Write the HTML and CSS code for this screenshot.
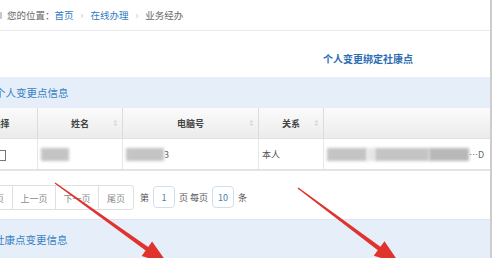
FILE: index.html
```html
<!DOCTYPE html>
<html lang="zh-CN">
<head>
    <meta charset="UTF-8">
    <title>业务经办</title>
    <link rel="stylesheet" href="styles.css">
</head>
<body>
    <div class="page">
        <div class="crumbs">
            <span class="crumb-icon"></span>
            <span>您的位置：</span>
            <a href="#">首页</a>
            <span class="sep">›</span>
            <a href="#">在线办理</a>
            <span class="sep">›</span>
            <span>业务经办</span>
        </div>

        <div class="actions">
            <a href="#" class="action-link">个人变更绑定社康点</a>
        </div>

        <div class="band">个人变更点信息</div>

        <table class="grid">
            <thead>
                <tr>
                    <th class="col-sel">选择</th>
                    <th class="col-name">姓名<span class="sort">⇕</span></th>
                    <th class="col-no">电脑号<span class="sort">⇕</span></th>
                    <th class="col-rel">关系<span class="sort">⇕</span></th>
                    <th></th>
                </tr>
            </thead>
            <tbody>
                <tr>
                    <td class="col-sel"><span class="check"></span></td>
                    <td><span class="blur" style="width: 28px"></span></td>
                    <td><span class="blur" style="width: 38px"></span><span class="tail">3</span></td>
                    <td>本人</td>
                    <td class="addr">
                        <span class="blur" style="width: 40px"></span><span class="blur light" style="width: 8px"></span><span class="blur" style="width: 54px"></span><span class="blur dark" style="width: 40px"></span><span class="tail">…D</span>
                    </td>
                </tr>
            </tbody>
        </table>

        <div class="pager">
            <div class="pager-btns">
                <span class="pg-btn narrow">首页</span>
                <span class="pg-btn">上一页</span>
                <span class="pg-btn">下一页</span>
                <span class="pg-btn narrow">尾页</span>
            </div>
            <span class="pg-label">第</span>
            <span class="pg-input">1</span>
            <span class="pg-label">页 每页</span>
            <span class="pg-input">10</span>
            <span class="pg-label">条</span>
        </div>

        <div class="band band-second">社康点变更信息</div>
    </div>

    <svg class="marks" width="493" height="258" viewBox="0 0 493 258">
        <polygon points="55.35,182.5 148.2,247 152.1,241.5 168,264 141.7,256.1 145.6,250.6 54.65,183.5" />
        <polygon points="298.4,187.5 380.4,246.7 384.5,241.3 400,264 373.7,255.7 377.8,250.3 297.6,188.5" />
    </svg>
</body>
</html>
```

FILE: styles.css
```css
html, body {
    margin: 0;
    padding: 0;
    overflow: hidden;
    background-color: #fff;
}

body {
    font-family: "Noto Sans CJK SC", "Noto Sans", sans-serif;
    color: #555;
    position: relative;
    height: 258px;
}

.page {
    margin-left: -36px;
    width: 526px;
    height: 258px;
    overflow: hidden;
    border-right: 2px solid #cdcdcd;
}

/* breadcrumb */
.crumbs {
    height: 30px;
    display: flex;
    align-items: center;
    padding-left: 30px;
    font-size: 9.5px;
    color: #666;
    border-bottom: 1px solid #ebebeb;
}

.crumb-icon {
    width: 8px;
    height: 7px;
    background-color: #c9c9c9;
    border-radius: 1px;
    margin-right: 5px;
}

.crumbs a {
    color: #2f7bc4;
    text-decoration: none;
}

.crumbs .sep {
    color: #bbb;
    margin: 0 7px 0 7px;
}

/* action */
.actions {
    height: 46px;
    display: flex;
    justify-content: flex-end;
    align-items: center;
    padding-right: 77px;
    padding-top: 8px;
    box-sizing: border-box;
}

.action-link {
    font-size: 10px;
    font-weight: bold;
    color: #2c6db1;
    text-decoration: none;
}

/* section bands */
.band {
    height: 31px;
    line-height: 31px;
    padding-left: 31px;
    background-color: #e6eff9;
    color: #3a82c4;
    font-size: 10.5px;
}

.band-second {
    border-top: 1px solid #dde6ee;
    height: 39px;
    line-height: 40px;
    padding-left: 30px;
}

/* grid */
.grid {
    width: 100%;
    border-collapse: collapse;
    font-size: 9px;
    table-layout: fixed;
}

.grid th {
    height: 30px;
    padding: 0;
    font-weight: bold;
    color: #444;
    background: linear-gradient(#fbfbfb, #ebebeb);
    border-right: 1px solid #dcdcdc;
    position: relative;
}

.grid th:last-child {
    border-right: none;
}

.grid .col-sel { width: 73px; }
.grid .col-name { width: 84px; }
.grid .col-no { width: 135px; }
.grid .col-rel { width: 64px; }

.sort {
    position: absolute;
    right: 3px;
    top: 9px;
    font-size: 8px;
    font-weight: normal;
    color: #d2d2d2;
}

.grid td {
    height: 30px;
    padding: 0 3px;
    border-top: 1px solid #e2e2e2;
    border-bottom: 1px solid #e2e2e2;
    border-right: 1px solid #e6e6e6;
    white-space: nowrap;
    overflow: hidden;
}

.grid td:last-child {
    border-right: none;
}

.grid td.col-sel {
    text-align: center;
    padding-left: 4px;
}

.check {
    display: inline-block;
    width: 8px;
    height: 9px;
    border: 1px solid #777;
    vertical-align: middle;
}

.blur {
    display: inline-block;
    height: 13px;
    background-color: #c4c4c4;
    filter: blur(1.5px);
    vertical-align: middle;
}

.blur.light {
    background-color: #e6e6e6;
}

.blur.dark {
    background-color: #b8b8b8;
}

.tail {
    vertical-align: middle;
    color: #666;
}

.addr {
    padding-left: 4px;
}

/* pager */
.pager {
    height: 49px;
    display: flex;
    align-items: center;
    padding-left: 14px;
    font-size: 9px;
    border-top: 1px solid #e6e6e6;
    box-sizing: border-box;
    padding-top: 4px;
}

.pager-btns {
    display: flex;
    margin-right: 6px;
}

.pg-btn {
    width: 44px;
    height: 25px;
    line-height: 25px;
    text-align: center;
    color: #8a8a8a;
    border: 1px solid #e0e0e0;
    margin-left: -1px;
    box-sizing: border-box;
}

.pg-btn.narrow {
    width: 36px;
}

.pg-btn:last-child {
    border-radius: 0 3px 3px 0;
}

.pg-label {
    color: #555;
}

.pg-input {
    width: 22px;
    height: 22px;
    line-height: 22px;
    margin: 0 4px;
    text-align: center;
    color: #4a7db5;
    border: 1px solid #cfdfee;
    border-radius: 4px;
    box-sizing: border-box;
}

/* annotation arrows */
.marks {
    position: absolute;
    top: 0;
    left: 0;
    pointer-events: none;
}

.marks polygon {
    fill: #e0332e;
}
```
